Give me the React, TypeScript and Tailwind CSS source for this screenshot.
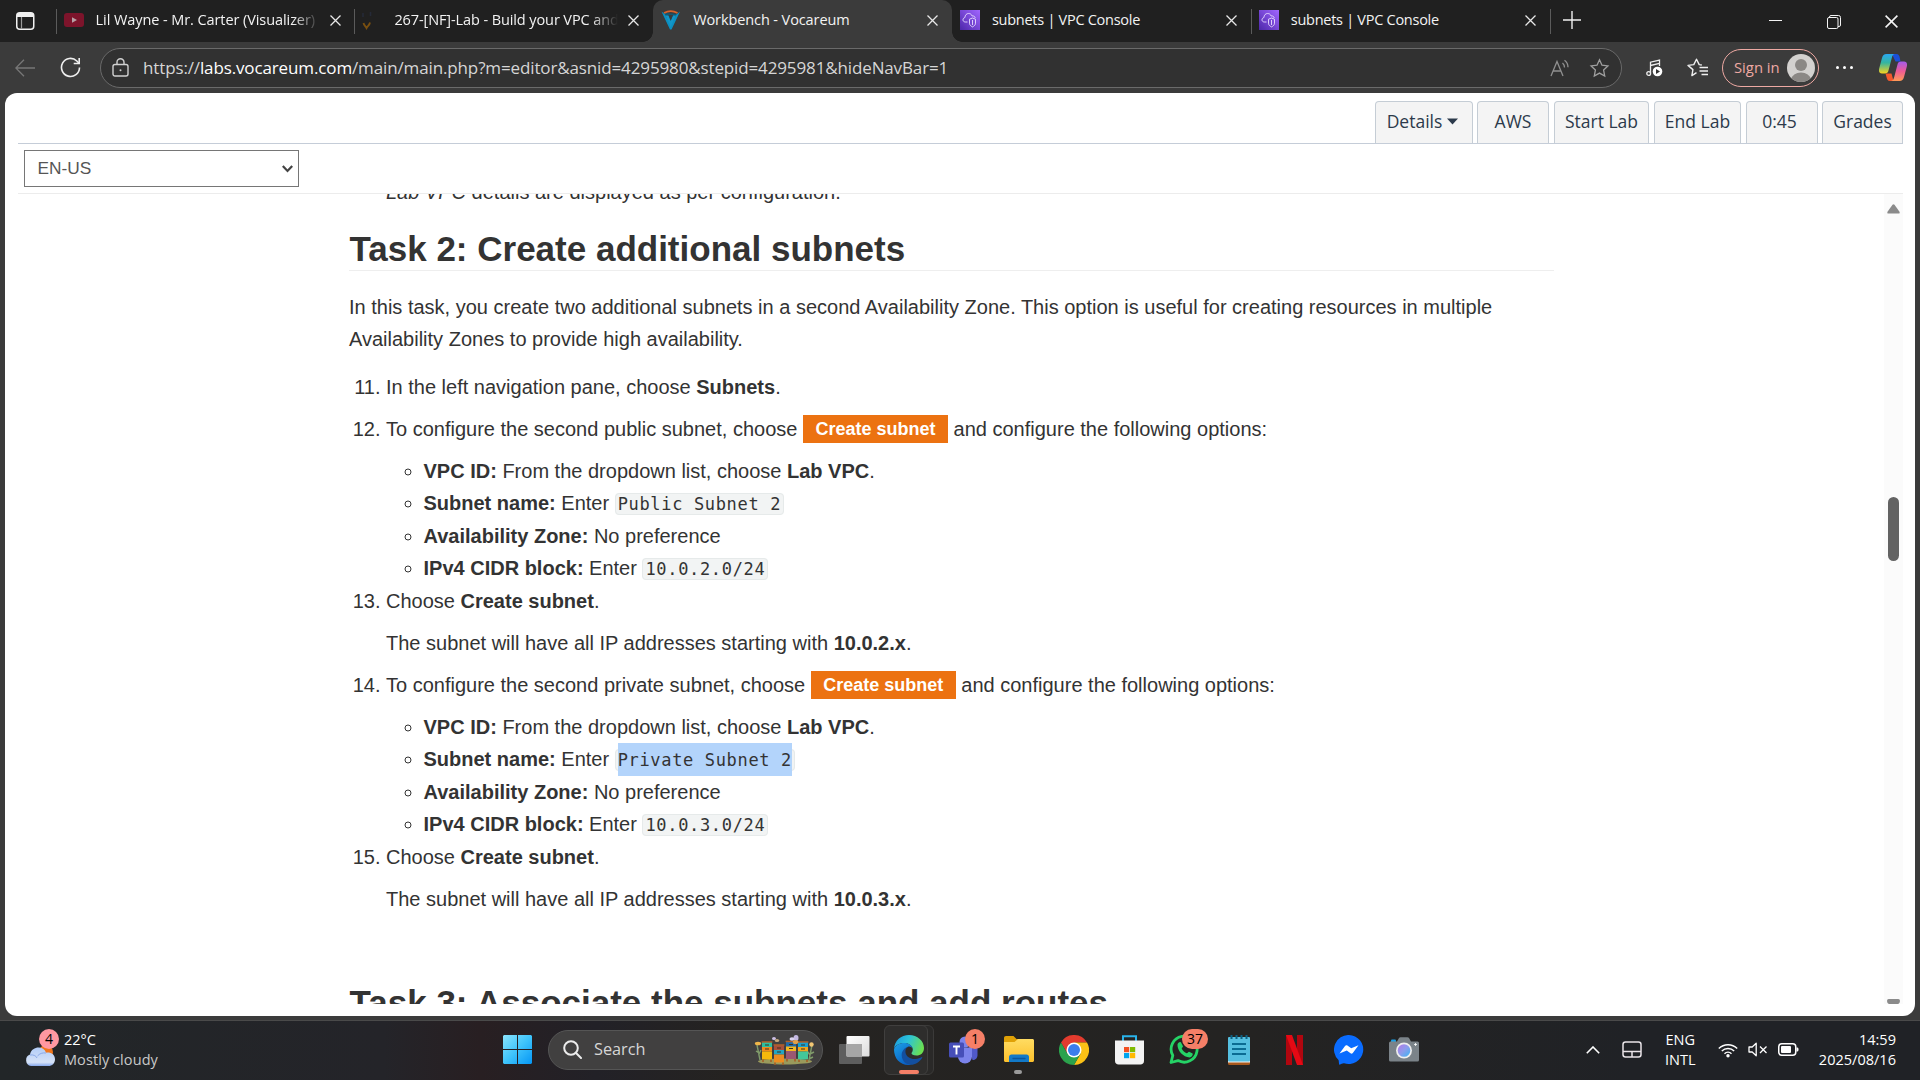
import type { ReactNode } from "react";
import { clsx } from "clsx";

const UI = "font-['Open_Sans',sans-serif]";

/* ---------- Tab strip ---------- */

function CloseX({ size = 11, className = "" }: { size?: number; className?: string }) {
  return (
    <svg width={size} height={size} viewBox="0 0 11 11" className={className} stroke="currentColor" strokeWidth="1.3" fill="none">
      <path d="M.5.5l10 10M10.5.5l-10 10" />
    </svg>
  );
}

function YouTubeIcon() {
  return (
    <svg width="20" height="20" viewBox="0 0 20 20">
      <rect y="3" width="20" height="14" rx="3" fill="#7d142b" />
      <path d="M8 7.3l5 2.7-5 2.7z" fill="#b9a0a6" />
    </svg>
  );
}

function LoadingIcon() {
  return (
    <svg width="20" height="20" viewBox="0 0 20 20" fill="none">
      <path d="M1.500 13c.5 2.500 2 3 3 5 1-2 3-2.500 3.500-5.500" stroke="#7a5010" strokeWidth="1.800" />
      <path d="M1 3v4M8.500 2v4" stroke="#252a38" strokeWidth="1.500" />
    </svg>
  );
}

function VocareumIcon() {
  return (
    <svg width="20" height="20" viewBox="0 0 20 20">
      <path d="M1 2.500l8 16.500h1.500L18.500 2.500l-2.500 1.500z" fill="#17566f" />
      <path d="M.5 1.500L4 4.500 9.700 15 15.500 4.500 19 1.500 10.500 19.500H9z" fill="#0c8fc0" />
      <path d="M4.500 5.500h3l2.200 5.500 2.300-5.500h3L9.700 17z" fill="#1296c8" />
      <path d="M7.500 5h4.500l-2.300 5.500z" fill="#3b3b3b" />
      <path d="M3 3C7 .8 12.500.8 16.500 3" stroke="#d8632c" strokeWidth="1.800" fill="none" />
    </svg>
  );
}

function VpcIcon({ id }: { id: string }) {
  return (
    <svg width="20" height="20" viewBox="0 0 20 20">
      <defs>
        <linearGradient id={id} x1="0" y1="1" x2="1" y2="0">
          <stop offset="0" stopColor="#4d27aa" />
          <stop offset="1" stopColor="#a166ff" />
        </linearGradient>
      </defs>
      <rect width="20" height="20" fill={`url(#${id})`} />
      <path d="M7.500 12H5.300C3.900 12 3 11 3 9.800c0-1.200.8-2 1.900-2.200C5 5 6.600 3.500 8.600 3.500c1.700 0 3 .9 3.600 2.500 1.600-.3 2.800.5 3 2" stroke="#e9ddff" strokeWidth=".9" fill="none" />
      <path d="M12.500 8l3 1.200v4c0 1.700-1.200 2.800-3 3.700-1.800-.9-3-2-3-3.700v-4zM12.500 10v5" stroke="#e9ddff" strokeWidth=".9" fill="none" />
    </svg>
  );
}

type TabProps = { icon: ReactNode; title: string; active?: boolean; divider?: boolean; fade?: boolean; titleClass?: string };

function Tab({ icon, title, active, divider, fade, titleClass = "tracking-[-0.1px]" }: TabProps) {
  return (
    <div className={clsx("relative flex h-[42px] w-[298.800px] items-center pb-[2px] pl-2", active && "rounded-t-[10px] bg-[#3b3b3b]")}>
      {divider && <span className="absolute left-0 top-[9px] h-[25px] w-px bg-[#5b5b5b]" />}
      {active && (
        <>
          <span className="absolute -left-2.5 bottom-0 size-2.5 bg-[radial-gradient(circle_at_0_0,#202020_9.500px,#3b3b3b_10px)]" />
          <span className="absolute -right-2.5 bottom-0 size-2.5 bg-[radial-gradient(circle_at_100%_0,#202020_9.500px,#3b3b3b_10px)]" />
        </>
      )}
      {icon}
      <span
        className={clsx(
          "-mt-px ml-3 w-[224px] overflow-hidden whitespace-nowrap text-[14.500px] leading-5 text-[#f3f3f3]",
          titleClass,
          fade && "[mask-image:linear-gradient(90deg,#000_88%,transparent_100%)]"
        )}
      >
        {title}
      </span>
      <CloseX className="ml-[10px] mt-px text-[#e8e8e8]" />
    </div>
  );
}

function TabStrip() {
  return (
    <div className="flex h-[42px] bg-[#202020]">
      <div className="flex w-[55.600px] items-center pb-px pl-4">
        <svg width="19" height="18" viewBox="0 0 19 18" fill="none">
          <rect x=".75" y=".75" width="17" height="16.500" rx="3" stroke="#f0f0f0" strokeWidth="1.500" />
          <path d="M1 2.500A2 2 0 013 1h12.500a2 2 0 012 2v2H1z" fill="#f0f0f0" />
          <path d="M5.500 5v12" stroke="#9a9a9a" strokeWidth="1.200" />
        </svg>
      </div>
      <Tab divider fade icon={<YouTubeIcon />} title="Lil Wayne - Mr. Carter (Visualizer)" titleClass="tracking-[-0.080px]" />
      <Tab divider fade icon={<LoadingIcon />} title="267-[NF]-Lab - Build your VPC and" />
      <Tab active icon={<VocareumIcon />} title="Workbench - Vocareum" />
      <Tab icon={<VpcIcon id="vpc-a" />} title="subnets | VPC Console" titleClass="tracking-[-0.27px]" />
      <Tab divider icon={<VpcIcon id="vpc-b" />} title="subnets | VPC Console" titleClass="tracking-[-0.27px]" />
      <div className="mt-[9px] h-[25px] w-px bg-[#5b5b5b]" />
      <svg width="18" height="18" viewBox="0 0 18 18" className="ml-[12px] mt-[11px]" stroke="#f0f0f0" strokeWidth="1.400">
        <path d="M9 0v18M0 9h18" />
      </svg>
      <div className="ml-auto flex items-start pr-[22px] text-[#f4f4f4]">
        <span className="mr-[45px] mt-5 h-px w-[13px] bg-current" />
        <svg width="14" height="14" viewBox="0 0 14 14" fill="none" stroke="currentColor" className="mr-[44px] mt-[15px]">
          <rect x=".5" y="2.500" width="10.500" height="11" rx="1.500" />
          <path d="M2.500 2.500V2A1.500 1.500 0 014 .5h7.500a2 2 0 012 2V10a1.500 1.500 0 01-1.500 1.500h-1" />
        </svg>
        <CloseX size={13} className="mt-[15px]" />
      </div>
    </div>
  );
}

/* ---------- Address bar ---------- */

const starPath = "M9.500 1.200l2.500 5.500 5.900.7-4.300 4.100 1.100 6-5.200-2.900-5.200 2.900 1.100-6L1.100 7.400l5.900-.7z";

function AddressBar() {
  return (
    <div className="flex h-[51px] items-center bg-[#3b3b3b] pl-[15px] pr-[13px]">
      <svg width="20" height="18" viewBox="0 0 20 18" fill="none" stroke="#777" strokeWidth="1.300">
        <path d="M20 9H1M9 .7L.8 9 9 17.300" />
      </svg>
      <svg width="21" height="21" viewBox="0 0 21 21" fill="none" stroke="#eee" strokeWidth="1.600" className="ml-[25px]">
        <path d="M19.500 10.500A9 9 0 1 1 16.800 4L19 6.200" />
        <path d="M19.200 1v5.500h-5.500" />
      </svg>
      <div className="ml-[19px] flex h-[40px] w-[1522px] items-center rounded-full border border-[#6a6a6a] bg-[#313131] pl-[11px] pr-[11px]">
        <svg width="17" height="19" viewBox="0 0 17 19" fill="none" stroke="#d0d0d0" strokeWidth="1.400">
          <rect x="1" y="6.500" width="15" height="11.500" rx="2" />
          <path d="M5 6.500V4.200a3.500 3.500 0 017 0v2.300" />
          <circle cx="8.500" cy="12.200" r="1" fill="#d0d0d0" stroke="none" />
        </svg>
        <span className="ml-[14px] whitespace-nowrap text-[17px] tracking-[-0.13px] text-[#d6d6d6]">
          https://<span className="text-white">labs.vocareum.com</span>/main/main.php?m=editor&amp;asnid=4295980&amp;stepid=4295981&amp;hideNavBar=1
        </span>
        <svg width="20" height="18" viewBox="0 0 20 18" fill="none" stroke="#909090" strokeWidth="1.300" className="ml-auto">
          <path d="M1 17L7 2.500 13 17M3 12h8M12.500 4a6 6 0 012 4.500M14.500 1.200a9 9 0 013.500 7" />
        </svg>
        <svg width="21" height="20" viewBox="-1 0 21 19" fill="none" stroke="#a0a0a0" strokeWidth="1.300" className="ml-[19px]">
          <path d={starPath} />
        </svg>
      </div>
      <svg width="17" height="18" viewBox="0 0 17 18" fill="none" stroke="#eee" strokeWidth="1.300" className="ml-[24px] mt-px">
        <path d="M4.500 14V3.200L13.500 1v6M4.500 6.500l9-2.200" />
        <circle cx="2.700" cy="14.500" r="1.900" />
        <circle cx="11.500" cy="12.500" r="4.800" fill="#fff" stroke="none" />
        <path d="M10 10l4 2.500-4 2.500z" fill="#333" stroke="none" />
      </svg>
      <svg width="21" height="20" viewBox="0 0 21 20" fill="none" stroke="#eee" strokeWidth="1.400" strokeLinejoin="round" className="ml-[24px]">
        <path d="M9.500 14.600l-4.600 3 1-6L1 7.400l5.800-.8L9.500 1.200l2.700 5.400 2.600.4" />
        <path d="M12.500 9.500H21M12.500 13H21M14.500 16.500H21" />
      </svg>
      <div className="ml-[14px] flex h-[38px] w-[97px] items-center rounded-full border-[1.500px] border-[#eea9a3] pl-[11px] text-[14.800px] text-[#eea9a3]">
        <span className="whitespace-nowrap">Sign in</span>
        <svg width="28" height="28" viewBox="0 0 28 28" className="ml-[7px] shrink-0">
          <defs>
            <clipPath id="avatar">
              <circle cx="14" cy="14" r="14" />
            </clipPath>
          </defs>
          <g clipPath="url(#avatar)">
            <rect width="28" height="28" fill="#d3d1cf" />
            <circle cx="14" cy="11" r="6" fill="#8b8885" />
            <ellipse cx="14" cy="25" rx="9.500" ry="6.500" fill="#8b8885" />
          </g>
        </svg>
      </div>
      <div className="ml-[17px] flex gap-[4px]">
        <span className="size-[3px] rounded-full bg-white" />
        <span className="size-[3px] rounded-full bg-white" />
        <span className="size-[3px] rounded-full bg-white" />
      </div>
      <svg width="28" height="27" viewBox="0 0 28 27" className="ml-auto">
        <defs>
          <linearGradient id="cp1" x1="0" y1="0" x2="0" y2="1">
            <stop offset="0" stopColor="#2aa8f2" />
            <stop offset=".45" stopColor="#35b5a0" />
            <stop offset="1" stopColor="#f7d21e" />
          </linearGradient>
          <linearGradient id="cp2" x1="0" y1="0" x2="0" y2="1">
            <stop offset="0" stopColor="#a45bea" />
            <stop offset=".5" stopColor="#ee5b95" />
            <stop offset="1" stopColor="#ff9a55" />
          </linearGradient>
        </defs>
        <path d="M13 0h4.500c2 0 2.700 1.500 3.300 4l.7 3.500h-5z" fill="#1b4fd8" />
        <path d="M6.500 19.500h6l2 7.500H11c-2.500 0-3-2-3.500-4z" fill="#f4582c" />
        <path d="M7.500 0H16c-2 0-2.700 2-3.300 4.200L9.500 16.500c-.6 2.200-1.500 3-3.500 3H3c-3 0-3.500-2.500-2.700-5.500L3 4C3.700 1.500 5 0 7.500 0z" fill="url(#cp1)" />
        <path d="M20.500 27H12c2 0 2.700-2 3.300-4.200l3.200-12.300c.6-2.200 1.500-3 3.500-3h3c3 0 3.500 2.500 2.700 5.500L25 23c-.7 2.500-2 4-4.500 4z" fill="url(#cp2)" />
      </svg>
    </div>
  );
}

/* ---------- Lab page ---------- */

function LabButton({ children, className }: { children: ReactNode; className: string }) {
  return (
    <div className={clsx("flex h-[42px] items-center justify-center whitespace-nowrap rounded-t-[4px] border border-b-0 border-[#c5cdd5] bg-[#f4f4f4] pb-[3px] text-[17.500px] text-[#2c3a4b]", className)}>
      {children}
    </div>
  );
}

function Code({ children, selected }: { children: ReactNode; selected?: boolean }) {
  return (
    <code className="mr-px rounded-[4px] border border-[#e6eaea] bg-[#f2f4f4] px-[2px] font-['DejaVu_Sans_Mono',monospace] text-[17px] leading-[19px] tracking-[0.660px]">
      {selected ? <span className="bg-[#b3d4fb] pb-[6px] pt-[7px]">{children}</span> : children}
    </code>
  );
}

function OrangeLabel() {
  return <span className="relative -top-px inline-block h-[28px] bg-[#ec7211] px-[12.500px] text-[18px] font-bold leading-[28px] text-white">Create subnet</span>;
}

function SubnetOptions({ name, cidr, selected }: { name: string; cidr: string; selected?: boolean }) {
  return (
    <ul className="mb-[0.400px] mt-[9.100px] list-[circle] pl-[37.500px]">
      <li className="h-[32.500px]">
        <b>VPC ID:</b> From the dropdown list, choose <b>Lab VPC</b>.
      </li>
      <li className="h-[32.500px]">
        <b>Subnet name:</b> Enter <Code selected={selected}>{name}</Code>
      </li>
      <li className="h-[32.500px]">
        <b>Availability Zone:</b> No preference
      </li>
      <li className="h-[32.500px]">
        <b>IPv4 CIDR block:</b> Enter <Code>{cidr}</Code>
      </li>
    </ul>
  );
}

function Instructions() {
  return (
    <div className="ml-[344px] w-[1205px] font-['Liberation_Sans',sans-serif] text-[20px] leading-[32.500px] text-[#333]">
      <p className="-mt-[18px] pl-[37px]">
        <i>Lab VPC</i> details are displayed as per configuration.
      </p>
      <h2 className="mt-[18.500px] border-b border-[#eee] pl-[0.500px] text-[35px] font-bold leading-[43px]">Task 2: Create additional subnets</h2>
      <p className="mb-[15.400px] mt-[19.600px]">
        In this task, you create two additional subnets in a second Availability Zone. This option is useful for creating resources in multiple
        <br />
        Availability Zones to provide high availability.
      </p>
      <ol start={11} className="list-decimal pl-[37px]">
        <li>
          In the left navigation pane, choose <b>Subnets</b>.
        </li>
        <li className="mt-[9.500px]">
          <p className="h-[32.500px]">
            To configure the second public subnet, choose <OrangeLabel /> and configure the following options:
          </p>
          <SubnetOptions name="Public Subnet 2" cidr="10.0.2.0/24" />
        </li>
        <li>
          Choose <b>Create subnet</b>.
          <p className="mt-[9.500px]">
            The subnet will have all IP addresses starting with <b>10.0.2.x</b>.
          </p>
        </li>
        <li className="mt-[9.500px]">
          <p className="h-[32.500px]">
            To configure the second private subnet, choose <OrangeLabel /> and configure the following options:
          </p>
          <SubnetOptions name="Private Subnet 2" cidr="10.0.3.0/24" selected />
        </li>
        <li>
          Choose <b>Create subnet</b>.
          <p className="mt-[9.500px]">
            The subnet will have all IP addresses starting with <b>10.0.3.x</b>.
          </p>
        </li>
      </ol>
      <h2 className="mt-[66px] border-b border-[#eee] pl-[0.500px] text-[35px] font-bold leading-[43px]">Task 3: Associate the subnets and add routes</h2>
    </div>
  );
}

function LabPage() {
  return (
    <div className="mx-[5px] flex h-[923px] flex-col overflow-hidden rounded-[12px] bg-white">
      <div className="ml-[13px] mr-[12px] flex h-[51px] shrink-0 items-end justify-end border-b border-[#c5cdd8]">
        <LabButton className="mr-[4px] w-[98px] gap-[5px] pr-[3px]">
          Details
          <svg width="11" height="7" viewBox="0 0 11 7" className="mt-px">
            <path d="M0 .5h11L5.500 6.500z" fill="#2c3a4b" />
          </svg>
        </LabButton>
        <LabButton className="mr-[5px] w-[72px]">AWS</LabButton>
        <LabButton className="mr-[5px] w-[95px]">Start Lab</LabButton>
        <LabButton className="mr-[5px] w-[87px]">End Lab</LabButton>
        <LabButton className="mr-[4px] w-[72px] pr-[5px]">0:45</LabButton>
        <LabButton className="w-[81px]">Grades</LabButton>
      </div>
      <div className="ml-[13px] mr-[12px] h-[50px] shrink-0 border-b border-[#ececec] pl-[6px] pt-[6px]">
        <div className="flex h-[37px] w-[275px] items-center justify-between border border-[#767676] pl-[12.500px] pr-[5px] font-['Liberation_Sans',sans-serif] text-[17.300px] text-[#555]">
          <span>EN-US</span>
          <svg width="11" height="8" viewBox="0 0 11 8" fill="none" stroke="#444" strokeWidth="2.200">
            <path d="M.8 1l4.700 5 4.700-5" />
          </svg>
        </div>
      </div>
      <div className="flex h-[810px] overflow-hidden">
        <Instructions />
        <div className="ml-auto mr-[12px] flex w-[19px] flex-col items-center bg-[#fbfbfb]">
          <svg width="13" height="10" viewBox="0 0 13 10" className="mt-[10px] shrink-0">
            <path d="M5.500.8q1-1.200 2 0l5 7q.7 1.700-1 1.700h-10q-1.700 0-1-1.700z" fill="#8b8b8b" />
          </svg>
          <span className="mt-[283px] h-[64px] w-[11px] shrink-0 rounded-full bg-[#636363]" />
          <span className="mt-auto h-[5px] w-[13px] shrink-0 rounded-b-[4px] rounded-t-[2px] bg-[#8b8b8b]" />
        </div>
      </div>
    </div>
  );
}

/* ---------- Taskbar ---------- */

function Slot({ children, className }: { children: ReactNode; className?: string }) {
  return <div className={clsx("relative flex h-[50px] w-[55px] items-center justify-center", className)}>{children}</div>;
}

function Badge({ children, className }: { children: ReactNode; className: string }) {
  return <span className={clsx("absolute flex h-5 items-center justify-center rounded-full text-[14px] leading-none text-black", className)}>{children}</span>;
}

function WindowsLogo() {
  return (
    <svg width="29" height="29" viewBox="0 0 29 29">
      <defs>
        <linearGradient id="win" x1="0" y1="0" x2="1" y2="1">
          <stop offset="0" stopColor="#8be4fd" />
          <stop offset=".5" stopColor="#3fc4fb" />
          <stop offset="1" stopColor="#0596f5" />
        </linearGradient>
      </defs>
      <path d="M1 0h13v14H0V1zM15 0h13l1 1v13H15zM0 15h14v14H1l-1-1zM15 15h14v13l-1 1H15z" fill="url(#win)" />
    </svg>
  );
}

function Hive({ x, y, colors }: { x: number; y: number; colors: [string, string, string] }) {
  return (
    <g transform={`translate(${x} ${y})`}>
      <rect width="10" height="6" fill={colors[0]} />
      <rect y="5" width="10" height="4.500" fill={colors[1]} />
      <rect y="9.500" width="10" height="8" fill={colors[2]} />
      <rect x="-.4" y="-.8" width="10.800" height="1.500" fill="#b0602a" />
      <path d="M3 3h4M3 7h4" stroke="#40301c" strokeWidth="1" />
      <path d="M1 17.500v2.500M9 17.500v2.500" stroke="#a65a20" strokeWidth="1.500" />
    </g>
  );
}

function Beehives() {
  return (
    <svg width="62" height="30" viewBox="0 0 62 30">
      <ellipse cx="31" cy="26.500" rx="27" ry="3" fill="#9a9a5c" />
      <path d="M3 10l3 15M2 16l3 2M7 15l-2 4M58 10l-3 15M60 17l-4 2M53 16l3 4M59 22l-4 2" stroke="#7f9a6a" strokeWidth="1.400" fill="none" />
      <Hive x={8} y={7} colors={["#2bbfa0", "#f08a1c", "#f5b80c"]} />
      <Hive x={20} y={10} colors={["#a8503c", "#22a7c4", "#ec8d22"]} />
      <Hive x={32} y={6.5} colors={["#2169a8", "#f4b921", "#9b5872"]} />
      <Hive x={44} y={7} colors={["#199fd0", "#f2a51d", "#43c79a"]} />
      <ellipse cx="4" cy="8.500" rx="3.200" ry="1.800" fill="#f0b64a" />
      <circle cx="57.500" cy="9.500" r="2.200" fill="#f2c673" />
      <ellipse cx="20" cy="3.500" rx="2" ry="1.500" fill="#cdbfe4" />
      <ellipse cx="23" cy="5.500" rx="2.200" ry="1.500" fill="#c9a87a" />
      <ellipse cx="42" cy="3" rx="2.500" ry="3" fill="#c4b9e2" />
      <ellipse cx="38" cy="4" rx="2.500" ry="1.800" fill="#d9d2ee" />
      <ellipse cx="41.500" cy="7" rx="2.800" ry="2" fill="#e2a048" />
    </svg>
  );
}

function EdgeIcon() {
  return (
    <svg width="30" height="30" viewBox="0 0 30 30">
      <defs>
        <linearGradient id="edge-a" x1="0" y1=".2" x2="1" y2=".5">
          <stop offset="0" stopColor="#1b9be0" />
          <stop offset=".45" stopColor="#2cc3d8" />
          <stop offset="1" stopColor="#6be050" />
        </linearGradient>
        <linearGradient id="edge-b" x1="0" y1="0" x2=".6" y2="1">
          <stop offset="0" stopColor="#1ba0e6" />
          <stop offset="1" stopColor="#0a5fc4" />
        </linearGradient>
      </defs>
      <path d="M0 14C.5 5.500 7 0 15 0c8.500 0 15 6 15 13 0 5-3.500 7.500-7.500 7.500-3.500 0-5-1.300-5-2.300 0-.8 1.300-1.200 1.300-3.700C18.800 11 15 8 10.500 8 5 8 1 10.500 0 14z" fill="url(#edge-a)" />
      <path d="M0 14.500C1 10.500 5 8 10.500 8c4 0 7 2.300 8 5-1.500-1.300-3-1.500-4-1.500-3.500 1.500-5.500 5-5 9 .5 4.500 4 8.500 8 9.200C7 31.500 0 24 0 14.500z" fill="url(#edge-b)" />
      <path d="M14.500 11.500c-2.500 1-3.500 3.500-3 6 .8 4.500 5.500 7 10 6.500 2.500-.2 4.500-1 6-1.800.8-.3 1 .3.600.8C25.500 27 21 29.800 17 29.800c-5 0-9-4-9.300-9.300-.2-4.500 3-8 6.800-9z" fill="#134f9f" />
    </svg>
  );
}

function TeamsIcon() {
  return (
    <svg width="31" height="30" viewBox="0 0 31 30">
      <circle cx="24" cy="8" r="4" fill="#5059c9" />
      <path d="M20 12h8.500v8c0 3-2 5-5 5z" fill="#5059c9" />
      <circle cx="16" cy="7" r="5.500" fill="#7b83eb" />
      <path d="M9 12.500h14v9a7 7 0 01-14 0z" fill="#7b83eb" />
      <rect y="7.500" width="15" height="15" rx="1.500" fill="#464eb8" />
      <path d="M4 11.500h7M7.500 11.500v8" stroke="#fff" strokeWidth="1.900" />
    </svg>
  );
}

function ExplorerIcon() {
  return (
    <svg width="30" height="27" viewBox="0 0 30 27">
      <defs>
        <linearGradient id="folder" x1="0" y1="0" x2="0" y2="1">
          <stop offset="0" stopColor="#ffdc62" />
          <stop offset="1" stopColor="#fcc02c" />
        </linearGradient>
      </defs>
      <path d="M0 2C0 .8.800 0 2 0h7.500l3 3H28v6H0z" fill="#e0a106" />
      <path d="M0 6h10.500L14 3h14.500c.8 0 1.500.7 1.500 1.500v20c0 .8-.7 1.500-1.500 1.500h-27C.7 26 0 25.300 0 24.500z" fill="url(#folder)" />
      <path d="M5 26v-5c0-1.500 1-2.500 2.500-2.500h15c1.500 0 2.500 1 2.500 2.500v5z" fill="#1279c8" />
      <path d="M9 22.500h12" stroke="#0a559c" strokeWidth="1.300" strokeLinecap="round" />
    </svg>
  );
}

function ChromeIcon() {
  return (
    <svg width="30" height="30" viewBox="0 0 30 30">
      <path d="M2 7.500A15 15 0 0128 7.500H15L8.500 18.700z" fill="#e33b2e" />
      <path d="M28 7.500A15 15 0 0115 30l6.500-11.200L15 7.500z" fill="#fbc116" />
      <path d="M15 30A15 15 0 012 7.500l6.500 11.300 13 0z" fill="#2ba24c" />
      <circle cx="15" cy="15" r="7.500" fill="#fff" />
      <circle cx="15" cy="15" r="6" fill="#3b7ded" />
    </svg>
  );
}

function StoreIcon() {
  return (
    <svg width="29" height="30" viewBox="0 0 29 30">
      <path d="M8 6V1.200h13V6" fill="none" stroke="#29b3ea" strokeWidth="2" />
      <path d="M0 5.500h29V26c0 2-1.500 3.500-3.500 3.500h-22C1.500 29.500 0 28 0 26z" fill="#f3f3f3" />
      <rect x="9" y="12" width="5.200" height="5.200" fill="#f25022" />
      <rect x="15" y="12" width="5.200" height="5.200" fill="#7fba00" />
      <rect x="9" y="18" width="5.200" height="5.200" fill="#00a4ef" />
      <rect x="15" y="18" width="5.200" height="5.200" fill="#ffb900" />
    </svg>
  );
}

function WhatsAppIcon() {
  return (
    <svg width="31" height="31" viewBox="0 0 31 31" fill="none">
      <path d="M2 28.500l1.800-7A13 13 0 1 1 9 26.600z" stroke="#25d366" strokeWidth="2.800" strokeLinejoin="round" />
      <path d="M8.500 10.500c.5-2 2.500-3 3.500-2l2 3.800c.2.800-1.500 1.700-1.200 2.400 1.200 2.300 2.700 3.600 4.900 4.500.8.300 1.700-1.700 2.400-1.500l3.500 1.800c.6 1.500-1 3.800-3 3.900-6.300-.2-12.500-6.700-12.100-12.900z" fill="#25d366" />
    </svg>
  );
}

function NotepadIcon() {
  return (
    <svg width="22" height="30" viewBox="0 0 22 30">
      <rect y="25" width="22" height="5" rx="1.500" fill="#a8581c" />
      <path d="M0 24h22v3.500H0z" fill="#f1f1f1" />
      <rect y="2" width="22" height="24.500" rx="1" fill="#55bfe0" />
      <path d="M3.500 0v4M8.500 0v4M13.500 0v4M18.500 0v4" stroke="#0d6182" strokeWidth="2" />
      <path d="M4 9h14M4 14h14M4 19h14" stroke="#0b6c93" strokeWidth="1.800" />
    </svg>
  );
}

function NetflixIcon() {
  return (
    <svg width="17" height="30" viewBox="0 0 17 30">
      <path d="M0 0h6v30H0zM11 0h6v30h-6z" fill="#b1060f" />
      <path d="M0 0h6l11 30h-6z" fill="#e50914" />
    </svg>
  );
}

function MessengerIcon() {
  return (
    <svg width="30" height="30" viewBox="0 0 30 30">
      <path d="M15 0a14.500 14.500 0 11-5 28.200c-1.500-.2-2.600 1-4.600 1.500-.5 0-.4-3.700-.9-4.700A14.500 14.500 0 0115 0z" fill="#0a6cff" />
      <path d="M5.500 18.500l5.700-7.800c.8-.8 1.500-.7 2.200-.1l3.800 2.700 7.300-3-5.700 7.800c-.8.9-1.600.8-2.300.2l-3.700-2.700z" fill="#fff" />
    </svg>
  );
}

function CameraIcon() {
  return (
    <svg width="30" height="25" viewBox="0 0 30 25">
      <defs>
        <linearGradient id="lens" x1="0" y1="0" x2="1" y2="1">
          <stop offset="0" stopColor="#b678e6" />
          <stop offset=".5" stopColor="#8c9cec" />
          <stop offset="1" stopColor="#38b6f2" />
        </linearGradient>
      </defs>
      <rect x="2" y="2.500" width="5" height="3" rx="1" fill="#1aa0e8" />
      <path d="M1.500 4.500H8l2-3.500q.5-.8 1.500-.8h7q1 0 1.500.8l2 3.500h6.500q1.500 0 1.500 1.500v17q0 1.500-1.500 1.500h-27Q0 24.500 0 23V6q0-1.500 1.500-1.500z" fill="#7b8389" />
      <circle cx="15" cy="13.500" r="8" fill="#eee" />
      <circle cx="15" cy="13.500" r="6.300" fill="url(#lens)" />
      <path d="M26.500 6v3M25 7.500h3" stroke="#fff" strokeWidth=".8" />
    </svg>
  );
}

function Tray() {
  return (
    <div className="ml-auto flex h-full items-center pr-[24px] text-white">
      <svg width="14" height="8" viewBox="0 0 14 8" fill="none" stroke="#fff" strokeWidth="1.600">
        <path d="M.8 7.200L7 1l6.200 6.200" />
      </svg>
      <svg width="20" height="17" viewBox="0 0 20 17" fill="none" stroke="#e9e4e8" strokeWidth="1.500" className="ml-[22px]">
        <rect x="1" y="1" width="18" height="15" rx="2.500" />
        <path d="M1 10.500h18M10 10.500V16" />
      </svg>
      <div className="ml-[20px] w-[37px] text-center text-[14.500px] leading-[20px]">
        ENG
        <br />
        INTL
      </div>
      <svg width="20" height="16" viewBox="0 0 20 16" fill="none" stroke="#fff" strokeWidth="1.400" className="ml-[19px]">
        <path d="M.8 6.500a13 13 0 0118.400 0M3.800 9a8.800 8.800 0 0112.400 0M6.500 11.700a5 5 0 017 0" />
        <circle cx="10" cy="13.700" r="1.700" fill="#fff" stroke="none" />
      </svg>
      <svg width="20" height="15" viewBox="0 0 20 15" fill="none" stroke="#fff" strokeWidth="1.300" className="ml-[10px]">
        <path d="M1 5h3.200l4-3.800v12.600l-4-3.800H1z" strokeLinejoin="round" />
        <path d="M12 4.500l6.500 6.500M18.500 4.500L12 11" />
      </svg>
      <svg width="21" height="13" viewBox="0 0 21 13" fill="none" className="ml-[10px]">
        <rect x=".75" y=".75" width="17" height="11.500" rx="3" stroke="#fff" strokeWidth="1.500" />
        <rect x="3" y="3" width="10" height="7" rx="1" fill="#fff" />
        <path d="M18.500 4.500h1q1 0 1 2t-1 2h-1z" fill="#fff" />
      </svg>
      <div className="ml-[20px] text-right text-[14.500px] leading-[20px] tracking-[0.020px]">
        14:59
        <br />
        2025/08/16
      </div>
    </div>
  );
}

function Taskbar() {
  return (
    <div className="relative flex h-[60px] items-center border-t border-[#4a4a4a] bg-[linear-gradient(90deg,#222628_0%,#242429_20%,#281f22_25%,#222127_31%,#252321_38%,#242322_65%,#202226_85%,#202226_100%)] pb-[2px]">
      <div className="flex w-[499px] items-center pl-[25px]">
        <div className="relative h-[36px] w-[34px]">
          <svg width="30" height="22" viewBox="0 0 30 22" className="mt-[14px]">
            <defs>
              <linearGradient id="cloud" x1="0" y1="0" x2="0" y2="1">
                <stop offset="0" stopColor="#b3cdf8" />
                <stop offset=".8" stopColor="#d5e2f7" />
                <stop offset="1" stopColor="#86a8ec" />
              </linearGradient>
            </defs>
            <circle cx="21" cy="6" r="7" fill="#f0761c" />
            <path d="M6 20a6 6 0 01-1-11.500C6 3.500 10 1.500 13.500 1.500c4 0 6.500 2 7.500 5.200 5-.7 9 2 9 6.500 0 4-3 6.800-6.500 6.800z" fill="url(#cloud)" />
            <path d="M5 9c3-.5 6 .5 7 3M12.500 10c2-2.500 5-3.500 8.500-3" stroke="#8aa9e8" fill="none" />
          </svg>
          <Badge className="left-[14px] top-[-3px] w-5 bg-[#ff98a2]">4</Badge>
        </div>
        <div className="ml-[5px] text-[14.500px] leading-[20px]">
          <div className="text-white">22°C</div>
          <div className="tracking-[0.080px] text-[#c9c9c9]">Mostly cloudy</div>
        </div>
      </div>
      <div className="ml-[4px]">
        <WindowsLogo />
      </div>
      <div className="ml-[16px] flex h-[40px] w-[275px] items-center rounded-full border border-[#555] bg-[#414040] pl-[14px] pr-[6px]">
        <svg width="19" height="19" viewBox="0 0 19 19" fill="none" stroke="#ececec" strokeWidth="2">
          <circle cx="8" cy="8" r="6.800" />
          <path d="M12.800 12.800l5.200 5.200" strokeLinecap="round" />
        </svg>
        <span className="ml-[12px] text-[16.300px] text-[#d6d6d6]">Search</span>
        <div className="ml-auto">
          <Beehives />
        </div>
      </div>
      <Slot className="ml-[4px]">
        <svg width="31" height="28" viewBox="0 0 31 28">
          <defs>
            <linearGradient id="tv" x1="0" y1="0" x2="1" y2="1">
              <stop offset="0" stopColor="#fff" />
              <stop offset="1" stopColor="#dcdcdc" />
            </linearGradient>
          </defs>
          <rect x="0" y="8" width="23" height="20" rx="1" fill="#5e5e5e" />
          <rect x="7.500" y="0" width="23" height="20.500" rx="1" fill="url(#tv)" />
          <path d="M7.500 8H23v12.500H7.500z" fill="#a6a6a6" />
        </svg>
      </Slot>
      <Slot className="z-10">
        <span className="absolute -z-10 left-[5px] top-0 h-[50px] w-[47px] rounded-[6px] border border-[#3b3a39] bg-[#2a2928]" />
        <span className="absolute -z-10 left-[2px] top-0 h-[50px] w-[44px] rounded-[6px] border border-[#403f3e] bg-[#2e2d2c]" />
        <div className="mr-px">
          <EdgeIcon />
        </div>
        <span className="absolute bottom-[1px] left-[17px] h-[4px] w-[20px] rounded-full bg-[#f57f67]" />
      </Slot>
      <Slot>
        <div className="mr-px">
          <TeamsIcon />
        </div>
        <Badge className="left-[28px] top-[4px] w-5 bg-[#f57f67]">1</Badge>
      </Slot>
      <Slot>
        <div className="mr-px">
          <ExplorerIcon />
        </div>
        <span className="absolute bottom-[1px] left-[22px] h-[4px] w-[8px] rounded-full bg-[#9a9a9a]" />
      </Slot>
      <Slot className="pr-px">
        <ChromeIcon />
      </Slot>
      <Slot className="pr-px">
        <StoreIcon />
      </Slot>
      <Slot className="pr-px">
        <WhatsAppIcon />
        <Badge className="left-[25px] top-[4px] w-[26px] bg-[#f57f67]">37</Badge>
      </Slot>
      <Slot className="pr-px">
        <NotepadIcon />
      </Slot>
      <Slot className="pr-px">
        <NetflixIcon />
      </Slot>
      <Slot className="pr-px">
        <MessengerIcon />
      </Slot>
      <Slot className="pr-px">
        <CameraIcon />
      </Slot>
      <Tray />
    </div>
  );
}

export default function App() {
  return (
    <div className={clsx("h-[1080px] w-[1920px] overflow-hidden bg-[#3b3b3b]", UI)}>
      <TabStrip />
      <AddressBar />
      <LabPage />
      <div className="h-[4px]" />
      <Taskbar />
    </div>
  );
}
